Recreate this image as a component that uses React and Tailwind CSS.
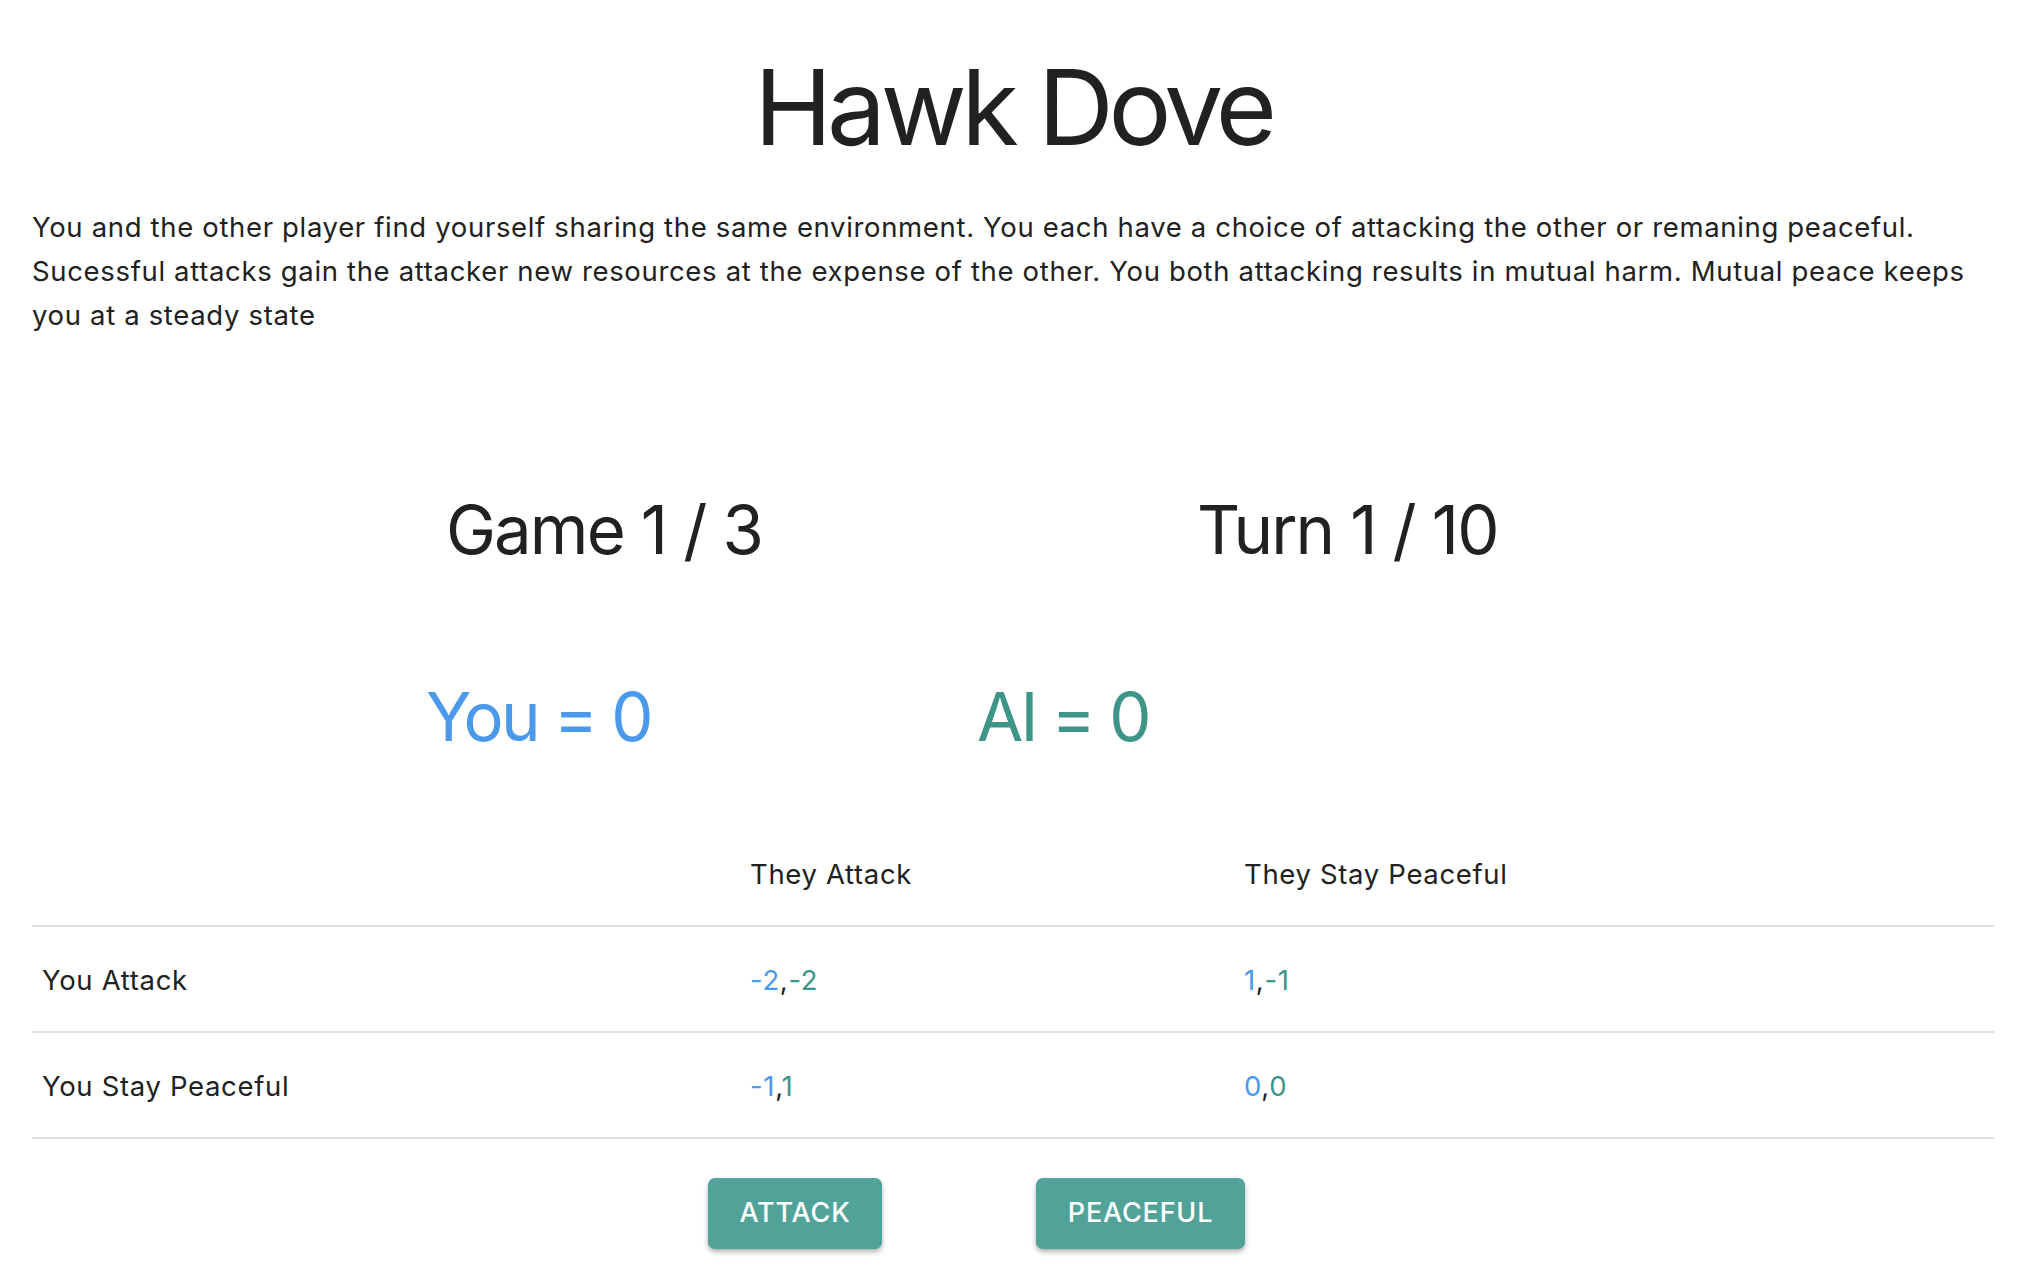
import React from "react";

const blue = "text-[#4a99ec]";
const teal = "text-[#3d9488]";

function Payoff({ you, ai }) {
  return (
    <span>
      <span className={blue}>{you}</span>,<span className={teal}>{ai}</span>
    </span>
  );
}

export default function App() {
  const rows = [
    { label: "You Attack", attack: ["-2", "-2"], peace: ["1", "-1"] },
    { label: "You Stay Peaceful", attack: ["-1", "1"], peace: ["0", "0"] },
  ];

  return (
    <div className="min-h-screen bg-white px-[32px] font-['Inter','Noto_Sans',sans-serif] text-[#212121]">
      <h1 className="pt-[54px] text-center text-[105px] leading-none font-normal tracking-[-0.05em]">
        Hawk Dove
      </h1>
      <p className="mt-[46px] text-[27.5px] leading-[44px] tracking-[0.024em]">
        You and the other player find yourself sharing the same environment.
        You each have a choice of attacking the other or remaning peaceful.
        Sucessful attacks gain the attacker new resources at the expense of the
        other. You both attacking results in mutual harm. Mutual peace keeps you
        at a steady state
      </p>

      {/* game / turn counters */}
      <div className="mt-[159px] flex pl-[414px] text-[67px] leading-none tracking-[-0.028em]">
        <div className="w-[751px] shrink-0">Game 1 / 3</div>
        <div>Turn 1 / 10</div>
      </div>

      {/* scores */}
      <div className="mt-[120px] flex pl-[394px] text-[67px] leading-none tracking-[-0.042em]">
        <div className={`w-[551px] shrink-0 ${blue}`}>You = 0</div>
        <div className={teal}>AI = 0</div>
      </div>

      {/* payoff table */}
      <div className="mt-[71px] text-[27.5px] tracking-[0.024em]">
        <div className="grid h-[106px] grid-cols-[708px_494px_1fr] items-center border-b-2 border-[#e0e0e0] pt-[4px]">
          <div className="pl-[10px]"></div>
          <div className="pl-[10px]">They Attack</div>
          <div className="pl-[10px]">They Stay Peaceful</div>
        </div>
        {rows.map((row) => (
          <div
            key={row.label}
            className="grid h-[106px] grid-cols-[708px_494px_1fr] items-center border-b-2 border-[#e0e0e0] pt-[3px]"
          >
            <div className="pl-[10px]">{row.label}</div>
            <div className="pl-[10px]">
              <Payoff you={row.attack[0]} ai={row.attack[1]} />
            </div>
            <div className="pl-[10px]">
              <Payoff you={row.peace[0]} ai={row.peace[1]} />
            </div>
          </div>
        ))}
      </div>

      <div className="mt-[39px] flex gap-[154px] pl-[676px]">
        <button className="h-[71px] w-[174px] rounded-[7px] bg-[#51a39a] text-[27px] font-medium tracking-[0.03em] text-white shadow-[0_3px_5px_rgba(0,0,0,0.3)]">
          ATTACK
        </button>
        <button className="h-[71px] w-[209px] rounded-[7px] bg-[#51a39a] text-[27px] font-medium tracking-[0.03em] text-white shadow-[0_3px_5px_rgba(0,0,0,0.3)]">
          PEACEFUL
        </button>
      </div>
    </div>
  );
}
